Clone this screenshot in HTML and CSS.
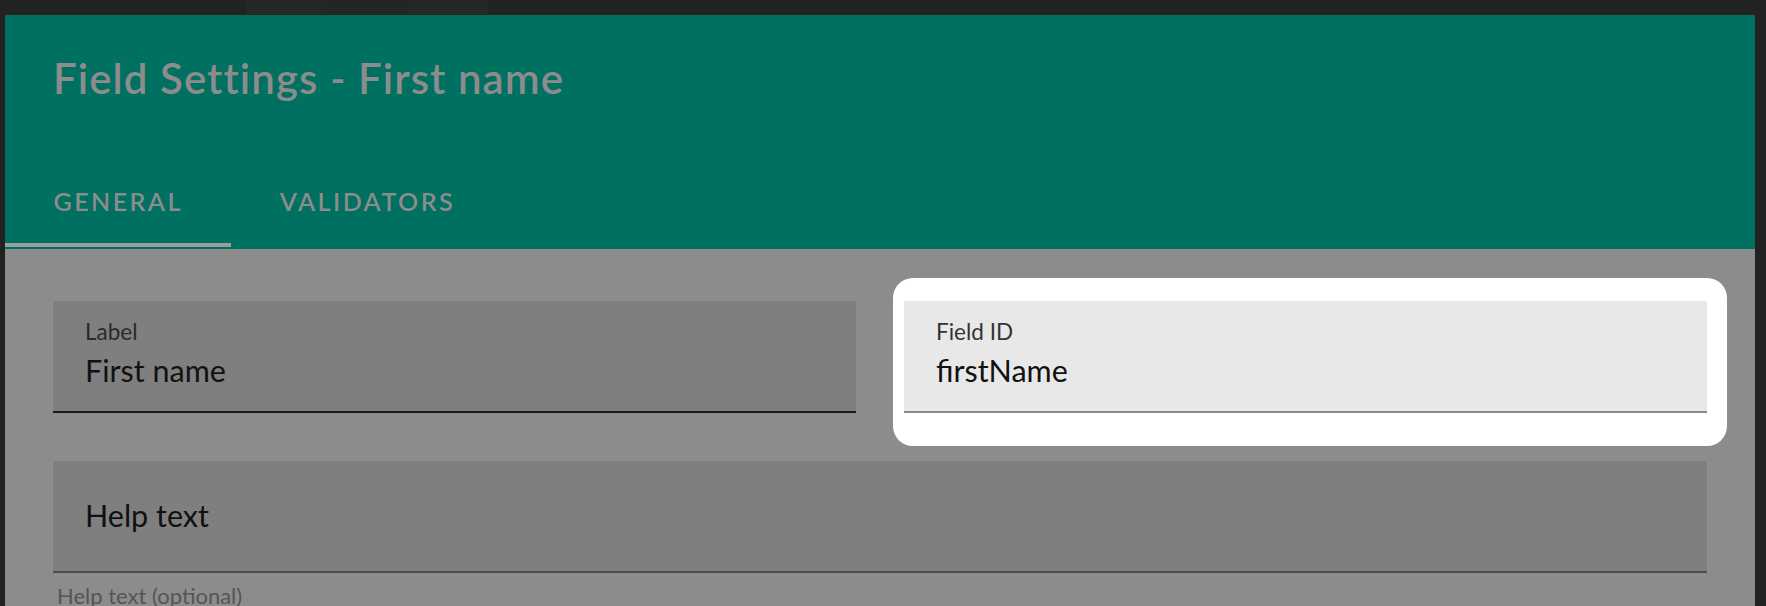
FILE: index.html
```html
<!DOCTYPE html>
<html lang="en">
<head>
<meta charset="utf-8">
<title>Field Settings - First name</title>
<link rel="stylesheet" href="styles.css">
</head>
<body>
  <div class="topstrip">
    <span class="blk b1"></span>
    <span class="blk b2"></span>
    <span class="blk b3"></span>
    <span class="blk b4"></span>
  </div>
  <div class="stage">
    <div class="gutter-left"></div>
    <div class="dialog">
      <header class="header">
        <h1 class="title">Field Settings - First name</h1>
        <nav class="tabs">
          <div class="tab active">GENERAL</div>
          <div class="tab">VALIDATORS</div>
        </nav>
      </header>
      <main class="content">
        <div class="row two">
          <div class="field dim">
            <div class="flabel">Label</div>
            <div class="fvalue">First name</div>
          </div>
          <div class="spot">
            <div class="field lit">
              <div class="flabel">Field ID</div>
              <div class="fvalue">firstName</div>
            </div>
          </div>
        </div>
        <div class="row">
          <div class="field dim help">
            <div class="fvalue">Help text</div>
          </div>
          <div class="hint">Help text (optional)</div>
        </div>
      </main>
    </div>
    <div class="gutter-right"></div>
  </div>
</body>
</html>
```

FILE: styles.css
```css
html, body {
  margin: 0;
  padding: 0;
}
body {
  width: 1766px;
  height: 606px;
  overflow: hidden;
  background: #222222;
  font-family: "Lato", "Open Sans", sans-serif;
}
.topstrip {
  height: 15px;
  display: flex;
  background: #232323;
}
.blk { display: block; height: 14px; }
.b1 { width: 246px; background: #232323; }
.b2 { width: 80px; background: #272727; }
.b3 { width: 82px; background: #252525; }
.b4 { width: 80px; background: #272727; }

.stage {
  display: flex;
  height: 591px;
}
.gutter-left { width: 5px; flex: none; background: #222; }
.gutter-right { flex: 1; background: #222; }
.dialog {
  width: 1750px;
  flex: none;
  display: flex;
  flex-direction: column;
  overflow: hidden;
}
.header {
  background: #007060;
  flex: none;
}
.title {
  margin: 0;
  padding: 39px 48px 50px;
  font-size: 42px;
  line-height: 49px;
  font-weight: 600;
  letter-spacing: 1.05px;
  color: #8c8c8c;
}
.tabs {
  display: flex;
  height: 96px;
}
.tab {
  position: relative;
  padding: 0 48.5px;
  line-height: 96px;
  font-size: 25px;
  font-weight: 600;
  letter-spacing: 2.45px;
  color: #8c8c8c;
}
.tab.active::after {
  content: "";
  position: absolute;
  left: 0;
  right: 0;
  bottom: 2px;
  height: 4px;
  background: #9d9d9d;
}
.content {
  flex: 1;
  background: #8c8c8c;
  padding: 52px 48px 0;
  overflow: hidden;
}
.row.two {
  display: grid;
  grid-template-columns: 1fr 1fr;
  column-gap: 48px;
  margin-bottom: 48px;
}
.field {
  box-sizing: border-box;
  height: 112px;
  padding: 18px 32px 0;
  border-bottom: 2px solid #1a1a1a;
}
.field.dim { background: #7f7f7f; }
.field.help {
  padding-top: 36px;
  border-bottom-color: #4d4d4d;
}
.flabel {
  font-size: 22.5px;
  line-height: 26px;
  color: #2a2a2a;
}
.fvalue {
  margin-top: 7px;
  font-size: 30.5px;
  line-height: 36px;
  color: #111111;
}
.help .fvalue { margin-top: 0; }
.spot {
  position: relative;
}
.spot::before {
  content: "";
  position: absolute;
  top: -23px;
  left: -11px;
  right: -20px;
  bottom: -33px;
  background: #ffffff;
  border-radius: 20px;
}
.field.lit {
  position: relative;
  background: #e8e8e8;
  border-bottom-color: #8a8a8a;
}
.field.lit .flabel { color: #333333; }
.hint {
  margin-top: 10px;
  padding-left: 4px;
  font-size: 22px;
  line-height: 26px;
  color: #555555;
}
```
